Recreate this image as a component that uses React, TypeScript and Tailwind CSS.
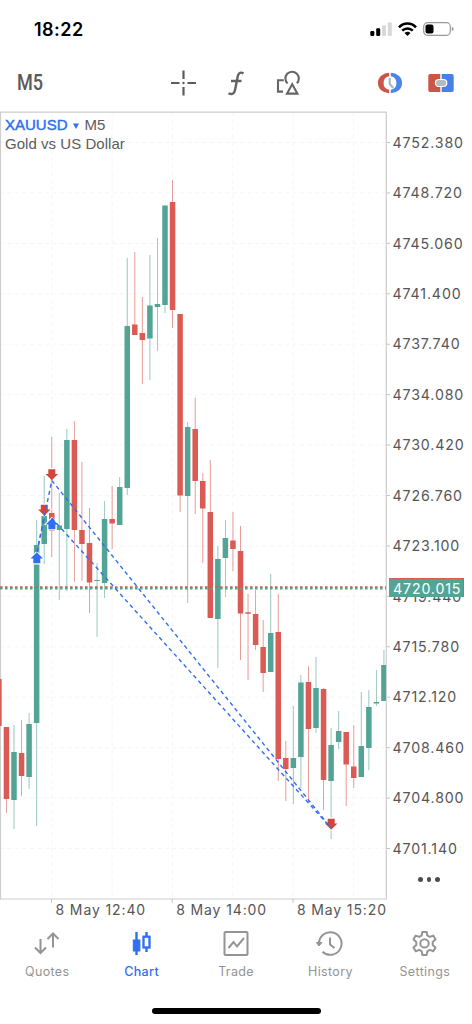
import React from "react";

type Candle = [up: 0 | 1, high: number, open: number, close: number, low: number];

const RED = "#db5b54";
const GREEN = "#53a495";
const BLUE = "#2f6ff2";

const FIRST_X = -1.1;
const STEP = 7.55;

const candles: Candle[] = [
  [0, 679, 679, 726, 726],
  [0, 727, 727, 799, 813],
  [1, 725, 752, 800, 829],
  [0, 720, 753, 776, 796],
  [1, 713, 724, 777, 789],
  [1, 520, 545, 723, 826],
  [1, 476, 516, 544, 564],
  [0, 437, 513, 531, 557],
  [1, 493, 525.5, 530, 600],
  [1, 429, 440, 529, 591],
  [0, 421, 440, 530, 582],
  [0, 462, 530, 544, 581],
  [0, 508, 543, 582.5, 613],
  [1, 563, 580, 581, 637],
  [1, 501, 519, 583, 598],
  [0, 486, 519, 523.5, 549],
  [1, 477, 487, 525, 525],
  [1, 258, 326, 488, 495],
  [0, 252, 324.5, 335, 335],
  [0, 297, 333, 340, 384],
  [1, 255, 305.5, 338.5, 380],
  [1, 238, 304, 307, 351],
  [1, 205.5, 205.5, 305, 313],
  [0, 180, 202, 310, 328],
  [0, 314, 314, 495.5, 512],
  [1, 422, 427, 496, 603],
  [0, 397.5, 429, 481, 514],
  [0, 473, 481, 508.5, 563],
  [0, 460, 512, 618, 618],
  [1, 546, 559, 619, 668],
  [1, 520, 538, 558, 597],
  [0, 512, 540.5, 549, 571],
  [0, 526, 551, 613.5, 660],
  [0, 594, 612.3, 613.8, 680],
  [0, 590, 614, 645, 650],
  [0, 620, 647, 673, 692],
  [1, 574, 633, 672, 672],
  [0, 594, 632, 759, 781],
  [0, 741, 758, 769, 801],
  [1, 706, 758, 768, 804],
  [1, 675, 682.5, 757, 788],
  [0, 666, 682, 729, 802],
  [1, 657, 688, 728, 733],
  [0, 688, 689, 780, 810],
  [1, 728, 745, 781, 839],
  [1, 711, 731, 742, 749],
  [0, 732, 732, 764.5, 806],
  [0, 725, 766.5, 778, 788],
  [1, 692, 746, 777, 777],
  [1, 690, 707, 748, 770],
  [1, 670, 702, 703.5, 706],
  [1, 650, 665, 701, 701],
];

const prices = [
  "4752.380", "4748.720", "4745.060", "4741.400", "4737.740",
  "4734.080", "4730.420", "4726.760", "4723.100", "4719.440",
  "4715.780", "4712.120", "4708.460", "4704.800", "4701.140",
];

const times = ["8 May 12:40", "8 May 14:00", "8 May 15:20"];

const gridX = [51.7, 112.1, 172.4, 232.8, 293.1, 353.5];

function Marker({ x, y, down }: { x: number; y: number; down?: boolean }) {
  const flip = down ? -1 : 1;
  return (
    <g transform={`translate(${x} ${y}) scale(1 ${flip})`}>
      <path d="M0 -7.2L8 1H4.6V6.4H-4.6V1H-8Z" fill="#fff" />
      <path d="M0 -5.8L6.2 0.4H3.5V5.3H-3.5V0.4H-6.2Z" fill={down ? "#d2463a" : BLUE} />
    </g>
  );
}

function Chart() {
  return (
    <svg width="390" height="793" viewBox="0 111 390 793" className="block shrink-0">
      <g stroke="#f5f5f5" strokeDasharray="4 3.5">
        {prices.map((p, i) => (
          <line key={p} x1="0" x2="386" y1={142.5 + i * 50.43} y2={142.5 + i * 50.43} />
        ))}
        {gridX.map((x) => (
          <line key={x} x1={x} x2={x} y1="112" y2="898" />
        ))}
      </g>
      <path d="M0.5 899V112.2H386.3V899H0" fill="none" stroke="#cdcdcd" strokeWidth="1.2" />
      <svg x="0" y="111" width="386" height="788" viewBox="0 111 386 788">
        {candles.map(([up, high, open, close, low], i) => {
          const x = FIRST_X + i * STEP;
          const color = up ? GREEN : RED;
          return (
            <g key={i}>
              <line x1={x} x2={x} y1={high} y2={low} stroke={color} strokeWidth="0.8" opacity="0.75" />
              <rect x={x - 2.75} y={open} width="5.5" height={close - open} fill={color} />
            </g>
          );
        })}
      </svg>
      <path d="M0 587.2H386" stroke={RED} strokeWidth="1.8" strokeDasharray="2.6 2.4" />
      <path d="M0 588.8H386" stroke={GREEN} strokeWidth="1.4" strokeDasharray="2.6 2.4" />
      <Marker x={36.8} y={558} />
      <Marker x={44.3} y={510} down />
      <Marker x={51.8} y={474.5} down />
      <Marker x={51.9} y={524} />
      <Marker x={331.2} y={824} down />
      <g stroke={BLUE} strokeWidth="1.4" strokeDasharray="4 3.3" fill="none">
        <path d="M37 552L51.8 480.5L331 828" />
        <path d="M37 552L44.3 516" />
        <path d="M51.8 518L331 828" />
      </g>
      <g stroke="#c4c4c4">
        {prices.map((p, i) => (
          <line key={p} x1="387" x2="390" y1={142.5 + i * 50.43} y2={142.5 + i * 50.43} />
        ))}
        <path d="M51.5 899V903M172.2 899V903M293 899V903" />
      </g>
    </svg>
  );
}

function StatusBar() {
  return (
    <header className="flex h-[58px] shrink-0 items-center justify-between pl-[34px] pr-[18px] font-['Inter',sans-serif]">
      <span className="mt-px text-[18px] font-semibold leading-none tracking-[0.45px] text-black">18:22</span>
      <div className="flex items-center gap-[6px]">
        <svg width="22" height="14" viewBox="0 0 22 14">
          <rect x="0.3" y="9" width="4" height="5" rx="1.2" />
          <rect x="6.2" y="6.2" width="4" height="7.8" rx="1.2" />
          <rect x="12" y="3.3" width="4" height="10.7" rx="1.2" fill="#d8d8d8" />
          <rect x="17.8" y="0.4" width="4" height="13.6" rx="1.2" fill="#d8d8d8" />
        </svg>
        <svg width="19" height="14" viewBox="0 0 19 14" fill="none" stroke="#000" strokeWidth="2.5">
          <path d="M1 5.3C5.8 0.2 13.2 0.2 18 5.3" />
          <path d="M4.2 8.7C7.2 5.7 11.8 5.7 14.8 8.7" />
          <path d="M6.5 10.9C8.3 9.4 10.7 9.4 12.5 10.9L9.5 13.9Z" fill="#000" stroke="none" />
        </svg>
        <svg width="31" height="14" viewBox="0 0 31 14">
          <rect x="0.7" y="0.7" width="26.6" height="12.6" rx="3.8" fill="none" stroke="#999" strokeWidth="1.2" />
          <rect x="2.5" y="2.4" width="8" height="9.2" rx="2" />
          <path d="M28.8 4.8Q30.7 5.5 30.7 7Q30.7 8.5 28.8 9.2Z" fill="#999" />
        </svg>
      </div>
    </header>
  );
}

function Toolbar() {
  return (
    <div className="flex h-[53px] shrink-0 items-center pb-[3px] pl-[17px] pr-[18px]">
      <span className="w-[153px] font-['Roboto',sans-serif] text-[22px] font-medium leading-none text-[#5a5a5a]">
        <span className="inline-block origin-left scale-x-[0.82]">M5</span>
      </span>
      <svg width="26" height="26" viewBox="0 0 26 26" stroke="#5c5c5c" strokeWidth="2.2">
        <path d="M13.5 0.5V9M13.5 17V25.5M1 13H9.5M17.5 13H26" />
        <circle cx="13.5" cy="13" r="1.2" fill="#5c5c5c" stroke="none" />
      </svg>
      <svg className="ml-[31px]" width="18" height="26" viewBox="0 0 18 26" fill="none" stroke="#636363" strokeWidth="2.4">
        <path d="M16.5 3.5C13.3 1.5 11.3 3.2 10.7 6.5L8 20C7.3 23.8 5 25 1.5 23.2M4 11H14.5" />
      </svg>
      <svg className="ml-[30px]" width="26" height="26" viewBox="0 0 26 26" fill="none" stroke="#666" strokeWidth="2.1">
        <path d="M8.8 10.3H3V21.6H8" />
        <path d="M12.6 13.4A6.7 6.7 0 1 1 21.8 13.2" />
        <path d="M17.2 14.2L12 23.6H22.4Z" />
      </svg>
      <div className="ml-auto flex items-center gap-[25px]">
        <svg width="27" height="22" viewBox="0 0 27 22" fill="none">
          <path d="M13.2 0.8A11.3 10.2 0 0 0 13.2 21.2V17.7A6.8 6.8 0 0 1 13.2 4.3Z" fill="#cb5548" />
          <path d="M14.8 0.8A11.3 10.2 0 0 1 14.8 21.2V17.7A6.8 6.8 0 0 0 14.8 4.3Z" fill="#4d84e8" />
          <path d="M13.7 6V11.8L17.2 16" stroke="#acb4bc" strokeWidth="2.1" />
        </svg>
        <svg width="26" height="20" viewBox="0 0 26 20">
          <path d="M2 1H12.3V19H2Q0.3 19 0.3 17V3Q0.3 1 2 1Z" fill="#cb5548" />
          <path d="M13.7 1H24Q25.7 1 25.7 3V17Q25.7 19 24 19H13.7Z" fill="#4780ea" />
          <rect x="7.4" y="6.5" width="11.4" height="7" rx="3.5" fill="#b4bac2" stroke="#fff" strokeWidth="1.2" />
        </svg>
      </div>
    </div>
  );
}

function PriceAxis() {
  return (
    <div className="relative flex-1 pt-[6.8px] font-['Inter',sans-serif] text-[14.2px] tracking-[0.85px] text-[#555557]">
      {prices.map((p) => (
        <div key={p} className="h-[50.43px] pl-[2.5px] leading-[50px]">{p}</div>
      ))}
      <div className="absolute -left-px top-[467px] h-[19px] w-[75px] border-r border-t border-[#db5b54] bg-[#53a495] pl-[4px] leading-[19px] text-white">
        4720.015
      </div>
      <div className="absolute left-[28px] top-[766px] flex gap-[4px]">
        <span className="size-[4.6px] rounded-full bg-[#4b4b50]" />
        <span className="size-[4.6px] rounded-full bg-[#4b4b50]" />
        <span className="size-[4.6px] rounded-full bg-[#4b4b50]" />
      </div>
    </div>
  );
}

function Tab({ label, active, children }: { label: string; active?: boolean; children: React.ReactNode }) {
  return (
    <div className={`flex flex-1 flex-col items-center ${active ? "text-[#2f6ff2]" : "text-[#949494]"}`}>
      <svg width="28" height="28" viewBox="0 0 28 28" fill="none" stroke="currentColor" strokeWidth="2">
        {children}
      </svg>
      <span className={`mt-[6px] text-[12.5px] leading-[16px] tracking-[0.35px] ${active ? "font-medium" : ""}`}>{label}</span>
    </div>
  );
}

function TabBar() {
  return (
    <nav className="flex h-[78px] shrink-0 pt-[8px] font-['Inter',sans-serif]">
      <Tab label="Quotes">
        <path d="M7.5 9V23M2 17.5L7.5 23L13 17.5M20 17.5V3.5M14.5 9L20 3.5L25.5 9" />
      </Tab>
      <Tab label="Chart" active>
        <path d="M8.5 2V25M18.5 2V6.5M18.5 17.5V22" strokeWidth="2.4" />
        <rect x="5.3" y="10" width="6.6" height="11" fill="currentColor" strokeWidth="1" />
        <rect x="15.5" y="6.7" width="6" height="10.8" strokeWidth="2.3" />
      </Tab>
      <Tab label="Trade">
        <rect x="2.5" y="2" width="23" height="23" rx="1" />
        <path d="M6.5 18L11.5 12L15 16.5L22 8" />
      </Tab>
      <Tab label="History">
        <path d="M3 14A11.3 11.3 0 1 1 6.5 21.7" />
        <path d="M0.4 12.5L3 16L6 12.5Z" fill="currentColor" strokeWidth="1" />
        <path d="M14 7.5V14.5L18.5 18" />
      </Tab>
      <Tab label="Settings">
        <path
          transform="translate(-0.5 -0.6)"
          strokeLinejoin="round"
          d="M11.8 2.5H16.2L16.8 6.1L19.2 7.5L22.8 6.2L25 10L22.2 12.5V15.5L25 18L22.8 21.8L19.2 20.5L16.8 21.9L16.2 25.5H11.8L11.2 21.9L8.8 20.5L5.2 21.8L3 18L5.8 15.5V12.5L3 10L5.2 6.2L8.8 7.5L11.2 6.1Z"
        />
        <circle cx="13.5" cy="13.4" r="4.2" />
      </Tab>
    </nav>
  );
}

export default function App() {
  return (
    <main className="flex h-[1024px] w-[472px] flex-col overflow-hidden bg-white">
      <StatusBar />
      <Toolbar />
      <section className="relative flex h-[793px] shrink-0">
        <Chart />
        <PriceAxis />
        <div className="absolute left-[5px] top-[5px] font-['Liberation_Sans',sans-serif] text-[15px] leading-[18.5px] text-[#5c5c5e]">
          <div className="flex items-center">
            <span className="text-[#2f6ff2] [-webkit-text-stroke:0.45px]">XAUUSD</span>
            <svg className="ml-[5px] mr-[6px] mt-px" width="6" height="6" viewBox="0 0 6 6" fill={BLUE}>
              <path d="M0 0.5H6L3 6Z" />
            </svg>
            <span>M5</span>
          </div>
          <div className="tracking-[0.04px]">Gold vs US Dollar</div>
        </div>
      </section>
      <div className="flex h-[18px] shrink-0 pl-[55.5px] font-['Inter',sans-serif] text-[14px] leading-[12px] tracking-[0.88px] text-[#555557]">
        {times.map((t) => (
          <span key={t} className="w-[120.7px] shrink-0 whitespace-nowrap">{t}</span>
        ))}
      </div>
      <TabBar />
      <div className="mx-auto mt-[8px] h-[6px] w-[169px] rounded-full bg-black" />
    </main>
  );
}
